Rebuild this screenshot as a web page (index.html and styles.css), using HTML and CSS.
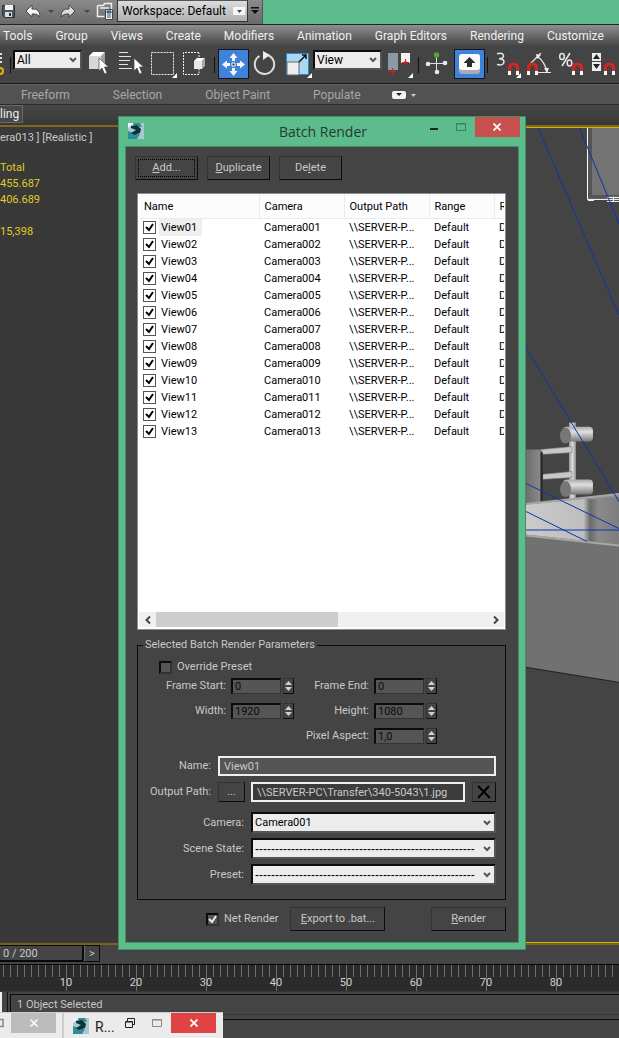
FILE: index.html
```html
<!DOCTYPE html>
<html lang="en">
<head>
<meta charset="utf-8">
<title>Batch Render</title>
<link rel="stylesheet" href="styles.css">
</head>
<body>
<div class="app">
  <header class="quickbar">
    <div class="quick">
      <svg class="quick-icons" viewBox="0 0 116 24" width="116" height="24" aria-hidden="true">
        <path d="M2.500 5.500h12v12h-10l-2-2z" fill="#4c5460" stroke="#2c323a"/>
        <path d="M5 5h8v5H5z" fill="#f2f2f2"/><path d="M5 12h7v5H5z" fill="#d9dde2"/><path d="M9 13h2v3H9z" fill="#333"/>
        <path d="M26 11l6-6v4q8-1 8 8q-3-4-8-3v3z" fill="#f4f4f4" stroke="#4a4a4a"/>
        <path d="M48 10h6l-3 3z" fill="#444"/>
        <path d="M75 11l-6-6v4q-8-1-8 8q3-4 8-3v3z" fill="#ddd" stroke="#4a4a4a"/>
        <path d="M84 10h6l-3 3z" fill="#444"/>
        <path d="M97.500 5.500h6l1-2h7v6M97.500 5.500v11h7M100 8h9" fill="none" stroke="#f0f0f0" stroke-width="1.500"/>
        <path d="M105.500 9.500h7v10h-7z" fill="#eee" stroke="#3a4a5a"/><path d="M107 11h4v2h-4zM107 15h4M107 17h4" fill="#38a" stroke="#456"/>
      </svg>
      <button class="workspace"><span>Workspace: Default</span><svg width="12" height="8" viewBox="0 0 12 8"><path d="M0 0h12v8H0z" fill="#f6f6f6"/><path d="M4 3h5L6.500 6z" fill="#444"/></svg></button>
      <button class="more" aria-label="More"><svg width="8" height="8" viewBox="0 0 8 8"><path d="M0 0h8v1.500H0zM0 3h8L4 7z" fill="#111"/></svg></button>
    </div>
  </header>

  <nav class="menubar">
    <button>Tools</button><button>Group</button><button>Views</button><button>Create</button><button>Modifiers</button><button>Animation</button><button>Graph Editors</button><button>Rendering</button><button>Customize</button>
  </nav>

  <div class="toolbar">
    <svg class="stub" viewBox="0 46 8 38" width="8" height="38" aria-hidden="true"><path d="M1 53v10" stroke="#ddd" stroke-width="2" stroke-dasharray="2 2"/><circle cx="0" cy="71" r="3" fill="none" stroke="#f0b000" stroke-width="2"/></svg>
    <i class="sep"></i>
    <select class="tool-select" aria-label="Selection filter"><option>All</option></select>
    <button aria-label="Select object"><svg viewBox="84 46 32 38"><path d="M89 56l4-4h12l-3 4z" fill="#fff"/><path d="M89 56h12v13H89z" fill="#d4d7db"/><path d="M101 56l4-4v12l-4 5z" fill="#9ba0a6"/><path d="M99 58v13l3-3 2.500 6 2.500-1-2.500-6h4z" fill="#fff" stroke="#444" stroke-width=".7"/></svg></button>
    <button aria-label="Select by name"><svg viewBox="116 46 32 38"><path d="M119 52.500h9M119 56.500h12M119 60.500h11M119 64.500h9M119 68.500h13" stroke="#e4e4e4"/><path d="M134 58v13l3-3 2.500 6 2.500-1-2.500-6h4z" fill="#fff" stroke="#444" stroke-width=".7"/></svg></button>
    <button aria-label="Rectangular region"><svg viewBox="148 46 32 38"><path d="M151.500 52.500h22v22h-22z" fill="none" stroke="#eee" stroke-dasharray="2 1"/><path d="M177 73v5h-5z" fill="#fff"/></svg></button>
    <button aria-label="Window crossing"><svg viewBox="180 46 32 38"><path d="M199 52.500h-15.500v22h15.500V69M199 57v-4" fill="none" stroke="#eee" stroke-dasharray="2 1"/><path d="M194 61l3-3h8l-3 3z" fill="#fff"/><path d="M194 61h8v8h-8z" fill="#e6e8ea"/><path d="M202 61l3-3v8l-3 3z" fill="#a6aab0"/></svg></button>
    <i class="sep"></i>
    <button class="on" aria-label="Move"><svg viewBox="217 46 32 38"><path d="M233.500 53l4 5h-2.500v3h-3v-3h-2.500zM233.500 76l4-5h-2.500v-3h-3v3h-2.500zM222 64.500l5-4v2.500h3v3h-3v2.500zM245 64.500l-5-4v2.500h-3v3h3v2.500z" fill="#f4f8fc"/><path d="M232 63h3v3h-3z" fill="#222" stroke="#fff"/></svg></button>
    <button aria-label="Rotate"><svg viewBox="249 46 32 38"><path d="M268.500 55.500a9.700 9.700 0 1 1-9 0.500" fill="none" stroke="#ddd" stroke-width="2"/><path d="M263 51l7 4-7 5z" fill="#eee"/></svg></button>
    <button aria-label="Scale"><svg viewBox="281 46 32 38"><path d="M286.500 53.500h22v21h-22z" fill="#a9d8f4" stroke="#2e86c8"/><path d="M287 62h12v13h-12z" fill="#eceef0" stroke="#666"/><path d="M299 62l7-7M302 55h4v4" fill="none" stroke="#111" stroke-width="1.500"/><path d="M312 73v5h-5z" fill="#fff"/></svg></button>
    <select class="tool-select" aria-label="Coordinate system"><option>View</option></select>
    <button aria-label="Pivot center"><svg viewBox="384 46 32 38"><path d="M388 53h10v17h-10z" fill="#8b98a6"/><path d="M401 53h9v10h-9z" fill="#f2f2f2"/><path d="M392.500 68v7M389 71.500h7M405.500 59v7M402 62.500h7" stroke="#e01818"/><path d="M390.500 71.500l2-2 2 2-2 2zM403.500 62.500l2-2 2 2-2 2z" fill="#e01818"/><path d="M413 73v5h-5z" fill="#fff"/></svg></button>
    <i class="sep"></i>
    <button aria-label="Manipulate"><svg viewBox="421 46 32 38"><path d="M436.500 56v15M428 63.500h17" stroke="#ddd"/><circle cx="436.500" cy="55" r="2.700" fill="#4fa82e"/><g fill="#e8e8e8"><circle cx="428" cy="64" r="2.300"/><circle cx="445" cy="63" r="2.300"/><circle cx="437" cy="72" r="2.300"/></g></svg></button>
    <button class="on" aria-label="Keyboard override"><svg viewBox="453 46 32 38"><rect x="459" y="54" width="21" height="20" rx="3" fill="#a8adb3"/><rect x="459" y="54" width="21" height="16" rx="3" fill="#fafafa"/><path d="M469.500 57l6 6h-3.500v4h-5v-4h-3.500z" fill="#2a2d33"/></svg></button>
    <i class="sep"></i>
    <button aria-label="Snap 3D"><svg viewBox="490 46 32 38"><path d="M497 53.700q6-1.500 6.500 2q0 3-4.500 3q5 0 5 3.300q-.5 4-7 2.500" fill="none" stroke="#e8e8e8" stroke-width="1.500"/><path d="M509.500 75v-7q0-4 4-4t4 4v7" fill="none" stroke="#d22620" stroke-width="3"/><path d="M508 71h3v4h-3zM516 71h3v4h-3z" fill="#fff"/><path d="M521 73v5h-5z" fill="#fff"/></svg></button>
    <button aria-label="Angle snap"><svg viewBox="522 46 32 38"><path d="M530 64l11-11M537 56q8 6 10 16M537 72.500h14" fill="none" stroke="#e8e8e8" stroke-width="1.200"/><path d="M536 54l5 1-4 4zM544 68h5l-2 5z" fill="#eee"/><path d="M528.500 75v-7q0-4 4-4t4 4v7" fill="none" stroke="#d22620" stroke-width="3"/><path d="M527 71h3v4h-3zM535 71h3v4h-3z" fill="#fff"/></svg></button>
    <button aria-label="Percent snap"><svg viewBox="554 46 32 38"><path d="M570 53l-8 13" stroke="#e8e8e8" stroke-width="1.500"/><ellipse cx="562" cy="56.500" rx="2.300" ry="3" fill="none" stroke="#e8e8e8" stroke-width="1.500"/><ellipse cx="569.500" cy="63" rx="2.300" ry="3" fill="none" stroke="#e8e8e8" stroke-width="1.500"/><path d="M573.500 75v-7q0-4 4-4t4 4v7" fill="none" stroke="#d22620" stroke-width="3"/><path d="M572 71h3v4h-3zM580 71h3v4h-3z" fill="#fff"/></svg></button>
    <button aria-label="Spinner snap"><svg viewBox="586 46 32 38"><path d="M592 53h9v8h-9zM592 62h9v9h-9z" fill="#eee"/><path d="M593 59h7l-3.500-5zM593 64h7l-3.500 5z" fill="#222"/><path d="M605.500 75v-7q0-4 4-4t4 4v7" fill="none" stroke="#d22620" stroke-width="3"/><path d="M604 71h3v4h-3zM612 71h3v4h-3z" fill="#fff"/></svg></button>
  </div>

  <nav class="ribbon">
    <button>Freeform</button><button>Selection</button><button>Object Paint</button><button>Populate</button>
    <button class="ribbon-min" aria-label="Minimize ribbon"><svg width="24" height="10" viewBox="0 0 24 10"><rect x="0" y="1" width="14" height="8" rx="2" fill="#f2f2f2"/><path d="M4 3h6L7 6z" fill="#222"/><path d="M19 4h5l-2.500 3z" fill="#ccc"/></svg></button>
  </nav>
  <div class="panelrow"><button class="paneltab">ling</button></div>

  <main class="viewports">
    <section class="view view-left">
      <p class="view-label">era013 ] [Realistic ]</p>
      <div class="stats"><span>Total</span><span>455.687</span><span>406.689</span><span class="fps">15,398</span></div>
    </section>
    <section class="view view-right">
      <svg class="scene" viewBox="526 128 93 814" width="93" height="814" aria-hidden="true">
        <defs>
          <linearGradient id="cyl" x1="0" y1="0" x2="0" y2="1"><stop offset="0" stop-color="#aaa"/><stop offset=".35" stop-color="#e0e0e0"/><stop offset="1" stop-color="#777"/></linearGradient>
          <linearGradient id="pole"><stop offset="0" stop-color="#999"/><stop offset=".5" stop-color="#ddd"/><stop offset="1" stop-color="#888"/></linearGradient>
          <linearGradient id="corner"><stop offset="0" stop-color="#cacaca"/><stop offset=".9" stop-color="#bebebe"/><stop offset="1" stop-color="#6a6a6a"/></linearGradient>
          <linearGradient id="inner"><stop offset="0" stop-color="#6a6a6a"/><stop offset=".3" stop-color="#8a8a8a"/><stop offset="1" stop-color="#7d7d7d"/></linearGradient>
          <linearGradient id="towel"><stop offset="0" stop-color="#6e6e6e"/><stop offset=".8" stop-color="#888"/><stop offset="1" stop-color="#333"/></linearGradient>
        </defs>
        <path d="M526 128h93v814h-93z" fill="#444"/>
        <path d="M588 128h31v71h-31z" fill="#555"/><path d="M592 128h27v67h-27z" fill="#737373"/>
        <path d="M587.500 128v71.500h31.500M607 197.500h12M607 201.500h12M613.500 197v5M588 200.500h6" fill="none" stroke="#fff"/>
        <path d="M569 423h7v78h-7z" fill="url(#pole)"/>
        <path d="M540 450l32-3v6l-32 2zM540 475l32-3v6l-32 2z" fill="#c8c8c8" stroke="#777" stroke-width=".6"/>
        <path d="M526 450h12q5 0 5 6v52h-17z" fill="url(#towel)"/><path d="M541.500 453v52" stroke="#282828" stroke-width="2"/>
        <rect x="563" y="427" width="30" height="15" rx="4" fill="url(#cyl)"/><ellipse cx="565.500" cy="436" rx="5.500" ry="8" fill="#777"/>
        <rect x="563" y="480" width="30" height="15" rx="4" fill="url(#cyl)"/><ellipse cx="565.500" cy="489.500" rx="5.500" ry="8" fill="#777"/>
        <path d="M526 505l93-11v52l-93-9z" fill="#929292"/>
        <path d="M526 505l64-6v44l-64-7z" fill="url(#corner)"/>
        <path d="M590 500l29-3v48l-29-3z" fill="url(#inner)"/>
        <path d="M526 535l93 10v138l-93-15z" fill="#717171"/>
        <path d="M526 504.500l93-10M526 536l93 10" stroke="#a6a6a6" stroke-width="2"/>
        <path d="M526 668l93 15" stroke="#222"/>
        <path d="M538 128L619 315M579.500 128L619 224M526 348L557.500 400 619 502M526 484l93 45M526 512l61 30M526 530.500h93" fill="none" stroke="#0a35b0"/>
      </svg>
    </section>
  </main>

  <div class="slider-row"><div class="frame">0 / 200</div><button class="next">&gt;</button></div>
  <div class="timeline"><span>10</span><span>20</span><span>30</span><span>40</span><span>50</span><span>60</span><span>70</span><span>80</span></div>
  <footer class="status"><div class="status-text">1 Object Selected</div><div class="status-prompt"></div></footer>
</div>

<form class="dialog" role="dialog" aria-labelledby="dlg-title">
  <div class="titlebar">
    <svg class="logo" viewBox="0 0 16 16" width="16" height="16" aria-hidden="true"><path d="M0 0h16v16H0z" fill="#a9c9ce"/><path d="M0 0h6L0 5z" fill="#eef5f6"/><path d="M5 0h7l2 4-8-1zM0 8l5 2 7 1-3 5H0z" fill="#2f8d9a"/><path d="M3 3l6-1 4 4-1 4-6 2-3-2 5-3-5-2z" fill="#0c343c"/></svg>
    <h1 id="dlg-title">Batch Render</h1>
    <div class="win-buttons">
      <button type="button" aria-label="Minimize"><svg width="10" height="10" viewBox="0 0 10 10"><path d="M1 6h8v2H1z" fill="#222"/></svg></button>
      <button type="button" aria-label="Maximize"><svg width="10" height="10" viewBox="0 0 10 10"><path d="M.5 1.500h9v7h-9zM0 2h10" fill="none" stroke="#3f7d5e"/></svg></button>
      <button type="button" class="close" aria-label="Close"><svg width="8" height="8" viewBox="0 0 8 8"><path d="M.5.500l7 7M7.500.500l-7 7" stroke="#fff" stroke-width="1.700"/></svg></button>
    </div>
  </div>
  <div class="dialog-body">
    <div class="actions">
      <button type="button" class="btn focus"><u>A</u>dd...</button>
      <button type="button" class="btn"><u>D</u>uplicate</button>
      <button type="button" class="btn">De<u>l</u>ete</button>
    </div>

    <div class="listview">
      <div class="list-area">
      <table>
        <colgroup><col class="c-name"><col class="c-cam"><col class="c-path"><col class="c-range"><col class="c-res"></colgroup>
        <thead><tr><th>Name</th><th>Camera</th><th>Output Path</th><th>Range</th><th>R</th></tr></thead>
        <tbody>
          <tr class="current"><td><label><input type="checkbox" checked><span>View01</span></label></td><td>Camera001</td><td>\\SERVER-P...</td><td>Default</td><td>D</td></tr>
          <tr><td><label><input type="checkbox" checked><span>View02</span></label></td><td>Camera002</td><td>\\SERVER-P...</td><td>Default</td><td>D</td></tr>
          <tr><td><label><input type="checkbox" checked><span>View03</span></label></td><td>Camera003</td><td>\\SERVER-P...</td><td>Default</td><td>D</td></tr>
          <tr><td><label><input type="checkbox" checked><span>View04</span></label></td><td>Camera004</td><td>\\SERVER-P...</td><td>Default</td><td>D</td></tr>
          <tr><td><label><input type="checkbox" checked><span>View05</span></label></td><td>Camera005</td><td>\\SERVER-P...</td><td>Default</td><td>D</td></tr>
          <tr><td><label><input type="checkbox" checked><span>View06</span></label></td><td>Camera006</td><td>\\SERVER-P...</td><td>Default</td><td>D</td></tr>
          <tr><td><label><input type="checkbox" checked><span>View07</span></label></td><td>Camera007</td><td>\\SERVER-P...</td><td>Default</td><td>D</td></tr>
          <tr><td><label><input type="checkbox" checked><span>View08</span></label></td><td>Camera008</td><td>\\SERVER-P...</td><td>Default</td><td>D</td></tr>
          <tr><td><label><input type="checkbox" checked><span>View09</span></label></td><td>Camera009</td><td>\\SERVER-P...</td><td>Default</td><td>D</td></tr>
          <tr><td><label><input type="checkbox" checked><span>View10</span></label></td><td>Camera010</td><td>\\SERVER-P...</td><td>Default</td><td>D</td></tr>
          <tr><td><label><input type="checkbox" checked><span>View11</span></label></td><td>Camera011</td><td>\\SERVER-P...</td><td>Default</td><td>D</td></tr>
          <tr><td><label><input type="checkbox" checked><span>View12</span></label></td><td>Camera012</td><td>\\SERVER-P...</td><td>Default</td><td>D</td></tr>
          <tr><td><label><input type="checkbox" checked><span>View13</span></label></td><td>Camera013</td><td>\\SERVER-P...</td><td>Default</td><td>D</td></tr>
        </tbody>
      </table>
      </div>
      <div class="scrollbar">
        <button type="button" aria-label="Scroll left"><svg width="6" height="8" viewBox="0 0 6 8"><path d="M5 .5L1.500 4 5 7.500" fill="none" stroke="#444" stroke-width="2"/></svg></button>
        <div class="track"><div class="thumb"></div></div>
        <button type="button" aria-label="Scroll right"><svg width="6" height="8" viewBox="0 0 6 8"><path d="M1 .5L4.500 4 1 7.500" fill="none" stroke="#444" stroke-width="2"/></svg></button>
      </div>
    </div>

    <fieldset class="params">
      <legend>Selected Batch Render Parameters</legend>
      <label class="override"><input type="checkbox" class="dark-check">Override Preset</label>
      <div class="numbers">
        <label for="fs">Frame Start:</label>
        <div class="spin"><input id="fs" value="0" disabled><div class="arrows"><button type="button" aria-label="Up"></button><button type="button" aria-label="Down"></button></div></div>
        <label for="fe">Frame End:</label>
        <div class="spin"><input id="fe" value="0" disabled><div class="arrows"><button type="button" aria-label="Up"></button><button type="button" aria-label="Down"></button></div></div>
        <label for="w">Width:</label>
        <div class="spin"><input id="w" value="1920" disabled><div class="arrows"><button type="button" aria-label="Up"></button><button type="button" aria-label="Down"></button></div></div>
        <label for="h">Height:</label>
        <div class="spin"><input id="h" value="1080" disabled><div class="arrows"><button type="button" aria-label="Up"></button><button type="button" aria-label="Down"></button></div></div>
        <label for="pa" class="aspect">Pixel Aspect:</label>
        <div class="spin"><input id="pa" value="1,0" disabled><div class="arrows"><button type="button" aria-label="Up"></button><button type="button" aria-label="Down"></button></div></div>
      </div>
      <div class="line"><label for="nm">Name:</label><input id="nm" class="text name" value="View01"></div>
      <div class="line path">
        <label for="op">Output Path:</label><button type="button" class="btn browse" aria-label="Browse">...</button>
        <input id="op" class="text" value="\\SERVER-PC\Transfer\340-5043\1.jpg" readonly>
        <button type="button" class="btn clear" aria-label="Clear"><svg width="14" height="14" viewBox="0 0 14 14"><path d="M1 1l12 12M12 1L1 13" fill="none" stroke="#000" stroke-width="2"/></svg></button>
      </div>
      <div class="pick"><label for="cam">Camera:</label><select id="cam"><option>Camera001</option></select></div>
      <div class="pick"><label for="ss">Scene State:</label><select id="ss" class="dashes"><option>-------------------------------------------------------</option></select></div>
      <div class="pick"><label for="pr">Preset:</label><select id="pr" class="dashes"><option>-------------------------------------------------------</option></select></div>
    </fieldset>

    <div class="bottom">
      <label><input type="checkbox" class="dark-check" checked>Net Render</label>
      <button type="button" class="btn export"><u>E</u>xport to .bat...</button>
      <button type="button" class="btn render"><u>R</u>ender</button>
    </div>
  </div>
</form>

<div class="minimized">
  <div class="mini mini-a">
    <svg width="4" height="10" viewBox="0 0 4 10" aria-hidden="true"><path d="M0 1.500h3v7H0" fill="none" stroke="#888" stroke-width="1.500"/></svg>
    <button class="mini-close" aria-label="Close"><svg width="8" height="8" viewBox="0 0 8 8"><path d="M.5.500l7 7M7.500.500l-7 7" stroke="#fff" stroke-width="1.500"/></svg></button>
  </div>
  <div class="mini mini-b">
    <svg class="logo" viewBox="0 0 16 16" width="16" height="16" aria-hidden="true"><path d="M0 0h16v16H0z" fill="#a9c9ce"/><path d="M0 0h6L0 5z" fill="#eef5f6"/><path d="M5 0h7l2 4-8-1zM0 8l5 2 7 1-3 5H0z" fill="#2f8d9a"/><path d="M3 3l6-1 4 4-1 4-6 2-3-2 5-3-5-2z" fill="#0c343c"/></svg>
    <span class="mini-title">R...</span>
    <button aria-label="Restore"><svg width="10" height="10" viewBox="0 0 10 10"><path d="M.5 3.500h7v6h-7zM.5 4h7M2.500 3V.500h7v6H8" fill="none" stroke="#222"/></svg></button>
    <button aria-label="Maximize"><svg width="10" height="8" viewBox="0 0 10 8"><path d="M.5.500h9v7h-9zM0 1h10" fill="none" stroke="#888"/></svg></button>
    <button class="mini-close red" aria-label="Close"><svg width="8" height="8" viewBox="0 0 8 8"><path d="M.5.500l7 7M7.500.500l-7 7" stroke="#fff" stroke-width="1.700"/></svg></button>
  </div>
</div>
</body>
</html>
```
FILE: styles.css
```css
:root {
  --green: #5cbc8c;
  --green-edge: #3f8f69;
  --bg: #444;
  --text: #c8c8c8;
}
* { box-sizing: border-box; }
body { margin: 0; position: relative; overflow: hidden; font: 11px/14px Roboto, sans-serif; color: var(--text); background: var(--bg); }
button, input, select { font: inherit; color: inherit; margin: 0; padding: 0; border: 0; background: none; border-radius: 0; }
svg { display: block; flex: none; }
h1, p { margin: 0; }

.app { display: flex; flex-direction: column; min-height: 100vh; }

.quickbar { background: var(--green); height: 24px; display: flex; }
.quick { display: flex; align-items: flex-start; background: linear-gradient(#8a8a8a, #6a6a6a); border-right: 1px solid #555; }
.workspace { display: flex; align-items: center; justify-content: space-between; width: 131px; height: 22px; margin-left: 1px; padding: 0 2px 0 4px; border: 1px solid #333; border-top-color: #555; background: linear-gradient(#dcdcdc, #b0b0b0); color: #000; font-size: 12px; line-height: 16px; }
.more { display: grid; place-items: center; width: 14px; height: 22px; }

.menubar { display: flex; gap: 23px; height: 22px; padding-left: 3px; border-top: 1px solid #222; background: linear-gradient(#8f8f8f, #454545); font-size: 12px; line-height: 20px; color: #f0f0f0; white-space: nowrap; overflow: hidden; }

.toolbar { display: flex; height: 38px; background: var(--bg); border-bottom: 1px solid #1a1a1a; overflow: hidden; }
.toolbar button { flex: none; width: 32px; height: 38px; padding: 0; }
.toolbar button svg { width: 32px; height: 38px; }
.toolbar .on { background: linear-gradient(#3f82dc, #3f82dc) center 4px / 29px 28px no-repeat, linear-gradient(#151515, #151515) center 3px / 31px 30px no-repeat; }
.sep { flex: none; width: 5px; height: 16px; margin-top: 11px; background: linear-gradient(#111, #111) 2px 0 / 1px 100% no-repeat; }
.tool-select { flex: none; width: 69px; height: 20px; margin: 4px 2px 0 0; font-size: 12px; }

select { appearance: none; padding: 0 16px 0 2px; border: 2px solid; border-color: #0c0c0c #555 #555 #0c0c0c; color: #000; background: #ececec url("data:image/svg+xml,%3Csvg xmlns='http://www.w3.org/2000/svg' width='8' height='6'%3E%3Cpath d='M1 1l3 3 3-3' fill='none' stroke='%23555' stroke-width='2'/%3E%3C/svg%3E") right 3px center no-repeat; }

.ribbon { display: flex; gap: 43px; align-items: center; height: 21px; padding-left: 21px; background: #525252; border-bottom: 1px solid #2c2c2c; border-top: 1px solid #606060; font-size: 12px; line-height: 18px; color: #a8a8a8; white-space: nowrap; }
.ribbon-min { margin-left: -12px; }
.panelrow { height: 20px; background: linear-gradient(#484848, #373737); }
.paneltab { display: block; width: 23px; height: 18px; border: 1px solid #6a6a6a; border-left: 0; background: #484848; font-size: 12px; line-height: 14px; color: #eee; text-align: left; }

.viewports { flex: 1; display: flex; border-bottom: 2px solid #75621c; }
.view { flex: 1; }
.view-left { background: #393939; border-top: 2px solid #806620; font-size: 11px; line-height: 16px; }
.view-right { display: flex; justify-content: flex-end; background: var(--bg); border-top: 2px solid #806620; border-bottom: 1px solid #c8b800; }
.view-right .scene { border-top: 1px solid #c8b800; }
.view-label { margin-top: 3px; }
.stats { display: flex; flex-direction: column; margin-top: 14px; color: #e0cc22; }
.stats .fps { margin-top: 16px; }

.slider-row { display: flex; height: 19px; line-height: 15px; }
.frame { width: 84px; height: 17px; padding-left: 3px; border: solid #0a0a0a; border-width: 1px 2px 2px 0; }
.next { width: 16px; height: 17px; border: 1px solid #0a0a0a; border-left-color: #666; }
.timeline { display: flex; align-items: flex-end; height: 28px; padding: 0 0 1px 31px; overflow: hidden; border-top: 1px solid #050505; border-bottom: 1px solid #383838; background:
  repeating-linear-gradient(90deg, transparent 0 66px, #707070 66px 67px, transparent 67px 70px) 0 0 / 100% 26px no-repeat,
  repeating-linear-gradient(90deg, transparent 0 3px, #707070 3px 4px, transparent 4px 7px) 0 0 / 100% 12px no-repeat, #2b2b2b; }
.timeline span { flex: none; width: 70px; text-align: center; color: #d0d0d0; }
.status { height: 46px; padding: 2px 0 0 10px; background: linear-gradient(#111, #111) 7px 0 / 1px 100% no-repeat, linear-gradient(#eee, #eee) 0 0 / 2px 100% no-repeat, var(--bg); }
.status-text { height: 21px; padding: 3px 6px; border: 1px solid #0c0c0c; border-width: 1px 0 1px 1px; border-bottom-color: #383838; }
.status-prompt { height: 22px; margin-top: 4px; border: solid #0c0c0c; border-width: 1px 0 0 1px; }

.dialog { position: absolute; left: 118px; top: 116px; width: 408px; padding: 0 6px 6px; background: var(--green); border: 1px solid var(--green-edge); }
.titlebar { display: flex; align-items: flex-start; height: 29px; padding-left: 3px; }
.titlebar .logo { margin-top: 6px; }
.titlebar h1 { flex: 1; padding-left: 135px; text-align: center; font: 14px/29px "Open Sans", sans-serif; color: #243a30; white-space: nowrap; }
.win-buttons { display: flex; margin-left: 54px; }
.win-buttons button { display: grid; place-items: center; width: 27px; height: 20px; }
.win-buttons .close { width: 45px; background: #c8504f; }
.dialog-body { padding: 9px 12px 11px 11px; background: var(--bg); border: 1px solid var(--green-edge); }
.actions { display: flex; gap: 9px; margin-left: -2px; }
.btn { min-width: 63px; height: 24px; border: 1px solid; border-color: #333 #0c0c0c #0c0c0c #333; text-align: center; }
.focus { outline: 1px dotted #000; outline-offset: -4px; }

.listview { display: flex; flex-direction: column; height: 437px; margin-top: 13px; padding: 0 1px 2px; border: 1px solid #8a8c92; background: #fff; color: #000; }
.list-area { flex: 1; overflow: hidden; }
table { table-layout: fixed; width: 100%; border-collapse: collapse; }
.c-name { width: 120px; } .c-cam, .c-path { width: 85px; } .c-range { width: 65px; }
th, td { padding: 0 0 0 5px; text-align: left; font-weight: 400; white-space: nowrap; overflow: hidden; }
th { height: 24px; padding-top: 2px; border-right: 1px solid #e4ecf6; border-bottom: 1px solid #e4ecf6; background: #fcfcfd; }
th:last-child { border-right: 0; }
td { height: 17px; line-height: 15px; }
td:first-child { padding-left: 4px; }
td label { display: flex; align-items: center; height: 17px; gap: 3px; }
td label span { padding: 1px 5px 1px 2px; }
.current label span { background: #efefef; }
input[type="checkbox"] { appearance: none; flex: none; width: 13px; height: 13px; border: 1px solid #555; background: #fff; }
input[type="checkbox"]:checked { background: #fff url("data:image/svg+xml,%3Csvg xmlns='http://www.w3.org/2000/svg' width='11' height='11'%3E%3Cpath d='M2 5l3 3 4-6' fill='none' stroke='%23000' stroke-width='2'/%3E%3C/svg%3E") center no-repeat; }
.scrollbar { display: flex; height: 15px; background: #f0f0f0; }
.scrollbar button { display: grid; place-items: center; width: 17px; height: 15px; }
.track { flex: 1; }
.thumb { width: 55%; height: 15px; background: #cdcdcd; }

.params { margin: 8px 0 0; padding: 8px 9px 14px 0; min-width: 0; border: 1px solid #0c0c0c; }
.params legend { margin-left: 5px; padding: 0 2px; line-height: 14px; }
.override { display: flex; align-items: center; gap: 5px; margin-left: 21px; height: 14px; }
.params .dark-check, .bottom .dark-check { border: 2px solid; border-color: #0c0c0c #333 #333 #0c0c0c; background-color: #555; }
.dark-check:checked { background: #555 url("data:image/svg+xml,%3Csvg xmlns='http://www.w3.org/2000/svg' width='9' height='9'%3E%3Cpath d='M1 4l3 3 4-6' fill='none' stroke='%23eee' stroke-width='2'/%3E%3C/svg%3E") center no-repeat !important; }
.numbers { display: grid; grid-template-columns: 88px 63px 70px 63px; column-gap: 5px; row-gap: 9px; margin-top: 4px; align-items: center; }
.numbers label { text-align: right; white-space: nowrap; }
.numbers .aspect { grid-column: 3; }
.spin { display: flex; gap: 2px; height: 16px; }
.spin input { flex: 1; min-width: 0; height: 16px; padding: 0 2px; border: solid; border-width: 2px 1px 1px 2px; border-color: #0c0c0c #333 #333 #0c0c0c; background: #555; color: #0c0c0c; }
.arrows { display: flex; flex-direction: column; align-items: center; justify-content: space-evenly; width: 11px; border: 1px solid; border-color: #333 #0c0c0c #0c0c0c #333; }
.arrows button { width: 7px; height: 4px; clip-path: polygon(50% 0, 100% 100%, 0 100%); background: #d0d0d0; }
.arrows button:last-child { clip-path: polygon(0 0, 100% 0, 50% 100%); }
.line { display: flex; margin-top: 12px; align-items: center; }
.line label { width: 73px; margin-right: 7px; text-align: right; white-space: nowrap; }
.text { flex: 1; min-width: 0; height: 20px; padding: 0 4px; border: 2px solid #eee; background: #555; }
.path { margin-top: 6px; }
.path .text { margin: 0 7px 0 6px; background: #3c3c3c; }
.browse { min-width: 27px; height: 20px; }
.clear { display: grid; place-items: center; min-width: 24px; height: 20px; }
.pick { display: flex; align-items: center; margin-top: 5px; }
.path + .pick { margin-top: 10px; }
.pick label { width: 106px; margin-right: 7px; text-align: right; }
.pick select { flex: 1; min-width: 0; height: 21px; overflow: hidden; }
.pick .dashes { font: 12px/14px "Liberation Sans", sans-serif; }
.bottom { display: flex; align-items: center; margin-top: 7px; padding-left: 69px; }
.bottom label { display: flex; align-items: center; gap: 5px; white-space: nowrap; }
.export { width: 95px; margin-left: 12px; }
.render { width: 75px; margin-left: auto; }

.minimized { position: absolute; left: 0; bottom: 0; display: flex; height: 26px; gap: 2px; background: #ccc; }
.mini { display: flex; align-items: flex-start; background: #ebebeb; border-top: 1px solid #ccc; }
.mini-a { width: 62px; padding-right: 6px; justify-content: space-between; }
.mini-a > svg { margin-top: 5px; }
.mini-b { width: 159px; padding: 0 7px 0 9px; }
.mini .logo { margin-top: 5px; }
.mini-title { width: 27px; padding: 2px 0 0 6px; color: #222; font-size: 14px; line-height: 24px; }
.mini button { display: grid; place-items: center; width: 27px; height: 20px; }
.mini .mini-close { width: 45px; background: #bcbcbc; }
.mini .red { background: #e04343; margin-left: auto; }
```
